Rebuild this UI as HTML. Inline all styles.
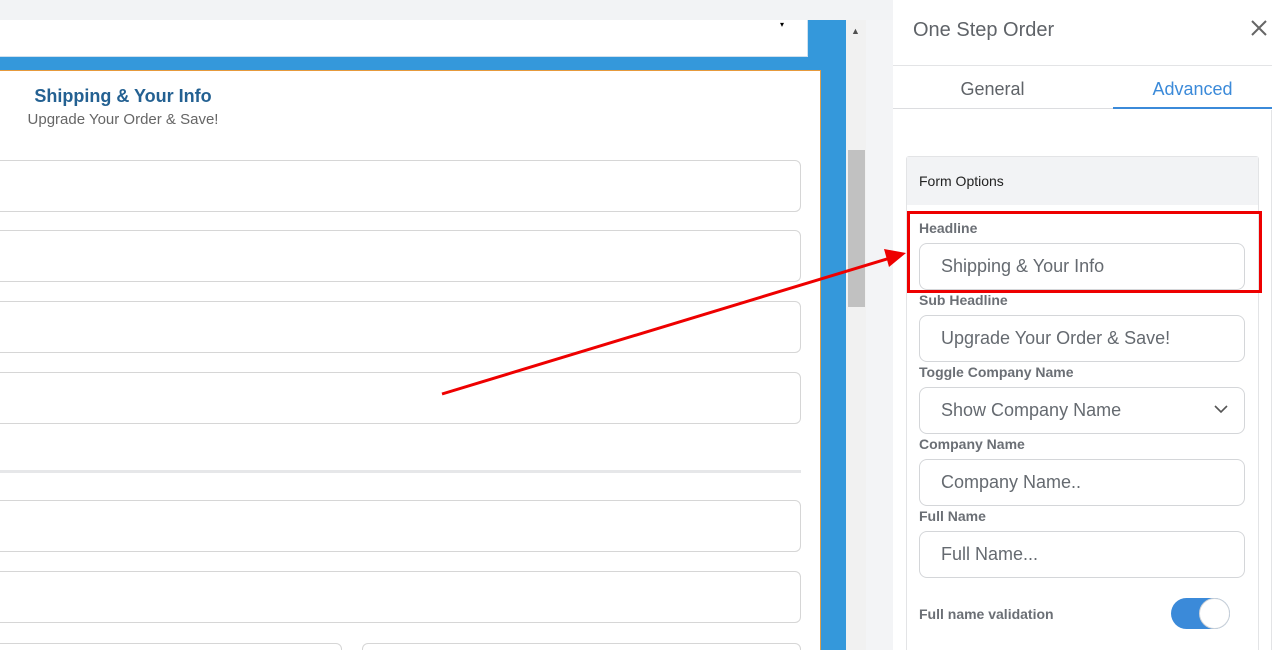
<!DOCTYPE html>
<html><head><style>
*{box-sizing:border-box;margin:0;padding:0}
html,body{width:1272px;height:650px;overflow:hidden}
body{position:relative;background:#f3f4f6;font-family:"Liberation Sans",sans-serif}
.a{position:absolute}
.inp{position:absolute;border:1px solid #d6d6d6;border-radius:6px;background:#fff}
.lbl{position:absolute;left:919px;font-size:14px;font-weight:bold;color:#6b6f75}
.pi{position:absolute;left:919px;width:326px;height:47px;border:1px solid #d4d6d9;border-radius:8px;font-size:18px;color:#656a70;padding:12px 0 0 21px;background:#fff}
</style></head><body>
<div class="a" style="left:0;top:0;width:893px;height:20px;background:#f2f3f5"></div>
<div class="a" style="left:0;top:20px;width:846px;height:630px;background:#3498db"></div>
<div class="a" style="left:0;top:20px;width:808px;height:37px;background:#fff;border-bottom:1px solid #cfe0ee;border-right:1px solid #cfe0ee"></div>
<div class="a" style="left:780px;top:20px;font-size:8px">▾</div>
<div class="a" style="left:0;top:70px;width:821px;height:580px;background:#fff;border-top:1px solid #e69a3c;border-right:1px solid #d9a050;overflow:hidden">
<div class="inp" style="left:-10px;top:572px;width:352px;height:30px"></div>
<div class="inp" style="left:362px;top:572px;width:439px;height:30px"></div>
</div>
<div class="a" style="left:0;top:86px;width:246px;text-align:center;font-size:18px;font-weight:bold;color:#246192">Shipping &amp; Your Info</div>
<div class="a" style="left:0;top:111px;width:246px;text-align:center;font-size:15px;color:#666">Upgrade Your Order &amp; Save!</div>
<div class="inp" style="left:-10px;top:160px;width:811px;height:52px"></div>
<div class="inp" style="left:-10px;top:230px;width:811px;height:52px"></div>
<div class="inp" style="left:-10px;top:301px;width:811px;height:52px"></div>
<div class="inp" style="left:-10px;top:372px;width:811px;height:52px"></div>
<div class="a" style="left:0;top:470px;width:801px;height:3px;background:#e6e7e9"></div>
<div class="inp" style="left:-10px;top:500px;width:811px;height:52px"></div>
<div class="inp" style="left:-10px;top:571px;width:811px;height:52px"></div>
<div class="a" style="left:846px;top:20px;width:20px;height:630px;background:#f1f1f1"></div>
<div class="a" style="left:851px;top:26px;font-size:9px;color:#505050">▲</div>
<div class="a" style="left:848px;top:150px;width:17px;height:157px;background:#c1c1c1"></div>
<div class="a" style="left:893px;top:0;width:379px;height:650px;background:#fff"></div>
<div class="a" style="left:913px;top:19px;font-size:20px;color:#5f6368">One Step Order</div>
<svg class="a" style="left:1251px;top:20px" width="16" height="16"><path d="M1 1L15 15M15 1L1 15" stroke="#666" stroke-width="2"/></svg>
<div class="a" style="left:893px;top:65px;width:379px;height:1px;background:#e3e4e6"></div>
<div class="a" style="left:893px;top:79px;width:199px;text-align:center;font-size:18px;color:#5f6368">General</div>
<div class="a" style="left:1113px;top:79px;width:159px;text-align:center;font-size:18px;color:#3b8ad9">Advanced</div>
<div class="a" style="left:893px;top:108px;width:379px;height:1px;background:#dcdde0"></div>
<div class="a" style="left:1113px;top:107px;width:159px;height:2px;background:#3b8ad9"></div>
<div class="a" style="left:1271px;top:110px;width:1px;height:540px;background:#e3e4e6"></div>
<div class="a" style="left:906px;top:156px;width:353px;height:500px;border:1px solid #e3e4e6;border-radius:3px"></div>
<div class="a" style="left:907px;top:157px;width:351px;height:48px;background:#f2f3f5"></div>
<div class="a" style="left:919px;top:173px;font-size:14px;color:#222">Form Options</div>
<div class="lbl" style="top:220px">Headline</div>
<div class="pi" style="top:243px">Shipping &amp; Your Info</div>
<div class="lbl" style="top:292px">Sub Headline</div>
<div class="pi" style="top:315px">Upgrade Your Order &amp; Save!</div>
<div class="lbl" style="top:364px">Toggle Company Name</div>
<div class="pi" style="top:387px">Show Company Name</div>
<svg class="a" style="left:1214px;top:404px" width="14" height="10"><path d="M1 2L7 8L13 2" stroke="#555" stroke-width="1.6" fill="none"/></svg>
<div class="lbl" style="top:436px">Company Name</div>
<div class="pi" style="top:459px">Company Name..</div>
<div class="lbl" style="top:508px">Full Name</div>
<div class="pi" style="top:531px">Full Name...</div>
<div class="lbl" style="top:606px">Full name validation</div>
<div class="a" style="left:1171px;top:598px;width:59px;height:31px;border-radius:16px;background:#3b8ad9"></div>
<div class="a" style="left:1199px;top:598px;width:31px;height:31px;border-radius:50%;background:#fff;border:1px solid #cfd3d8"></div>
<div class="a" style="left:907px;top:211px;width:355px;height:82px;border:3px solid #e00"></div>
<svg class="a" style="left:0;top:0" width="1272" height="650"><line x1="442" y1="394" x2="890" y2="258" stroke="#e00" stroke-width="3"/><polygon points="906,253 884,249 889,267" fill="#e00"/></svg>
</body></html>
